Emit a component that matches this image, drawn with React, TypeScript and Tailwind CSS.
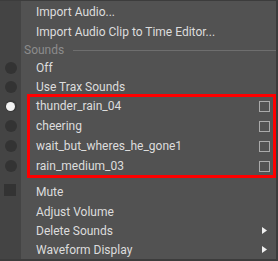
import React from 'react';

// Maya-style context menu: Sounds submenu with annotated selection box

type Mark = 'none' | 'radio' | 'radioOn' | 'square';

const Gutter: React.FC<{ mark: Mark }> = ({ mark }) => (
  <div className="w-[21px] shrink-0 self-stretch bg-[#444444] flex items-center justify-center">
    {mark === 'radio' && <div className="w-3 h-3 rounded-full bg-[#333333]" />}
    {mark === 'radioOn' && (
      <div className="w-3 h-3 rounded-full bg-[#3a3a3a] flex items-center justify-center">
        <div className="w-[9px] h-[9px] rounded-full bg-[#f2f2f2]" />
      </div>
    )}
    {mark === 'square' && <div className="w-3 h-3 bg-[#333333] -mt-1 -ml-[1px]" />}
  </div>
);

interface ItemProps {
  label: string;
  mark?: Mark;
  check?: boolean;
  sub?: boolean;
  h?: string;
}

const Item: React.FC<ItemProps> = ({ label, mark = 'none', check, sub, h = 'h-5' }) => (
  <div className={`flex items-stretch ${h}`}>
    <Gutter mark={mark} />
    <div className="flex-1 flex items-center pl-[15px] pr-[6px] text-[#dddddd]">
      <span className="flex-1 whitespace-nowrap">{label}</span>
      {check && <div className="w-[11px] h-[11px] border border-[#aaaaaa]" />}
      {sub && (
        <svg width="5" height="7" viewBox="0 0 5 7" className="mr-[3px]">
          <polygon points="0,0 5,3.5 0,7" fill="#f0f0f0" />
        </svg>
      )}
    </div>
  </div>
);

export default function App() {
  return (
    <div
      className="w-[278px] h-[261px] bg-[#525252] border-t border-r-2 border-b-2 border-[#3c3c3c] flex flex-col overflow-hidden text-[12px]"
      style={{ fontFamily: 'Roboto, "Liberation Sans", Arial, sans-serif' }}
    >
      <div className="flex h-[1px]">
        <div className="w-[21px] bg-[#444444]" />
      </div>
      <Item label="Import Audio..." />
      <Item label="Import Audio Clip to Time Editor..." />

      {/* section header */}
      <div className="flex items-stretch h-4">
        <div className="w-[21px] bg-[#444444]" />
        <div className="flex-1 flex items-center pl-[3px] gap-[9px]">
          <span className="text-[#8c8c8c]">Sounds</span>
          <div className="flex-1 h-px bg-[#6e6e6e]" />
        </div>
      </div>

      <Item label="Off" mark="radio" h="h-[19px]" />
      <Item label="Use Trax Sounds" mark="radio" h="h-[19px]" />

      <div className="relative">
        <Item label="thunder_rain_04" mark="radioOn" check />
        <Item label="cheering" mark="radio" check />
        <Item label="wait_but_wheres_he_gone1" mark="radio" check />
        <Item label="rain_medium_03" mark="radio" check />
        <div className="absolute left-[27px] right-0 top-[-2px] bottom-[-2px] border-[3px] border-[#ff0000] pointer-events-none" />
      </div>

      <div className="flex h-[6px]">
        <div className="w-[21px] bg-[#444444]" />
      </div>

      <Item label="Mute" mark="square" />
      <Item label="Adjust Volume" h="h-[19px]" />
      <Item label="Delete Sounds" sub h="h-[19px]" />
      <Item label="Waveform Display" sub h="h-[19px]" />
      <div className="flex flex-1">
        <div className="w-[21px] bg-[#444444]" />
      </div>
    </div>
  );
}
